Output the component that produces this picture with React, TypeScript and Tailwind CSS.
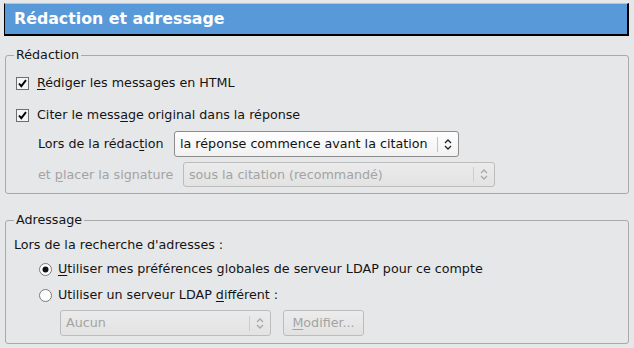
import React from "react"

function CheckBox() {
    return (
        <svg width="13" height="13" viewBox="0 0 13 13" className="shrink-0">
            <rect x="0.5" y="0.5" width="12" height="12" fill="#f4f4f4" stroke="#6e6e6e" />
            <path d="M3 6.5 L5.3 9.2 L10 3.2" fill="none" stroke="#000" strokeWidth="1.9" />
        </svg>
    )
}

function Radio({ checked }: { checked?: boolean }) {
    return (
        <svg width="13" height="13" viewBox="0 0 13 13" className="shrink-0">
            <circle cx="6.5" cy="6.5" r="6" fill="#fdfdfd" stroke="#7a7a7a" />
            {checked && <circle cx="6.5" cy="6.5" r="3" fill="#111" />}
        </svg>
    )
}

function Arrows({ disabled }: { disabled?: boolean }) {
    const c = disabled ? "#a8a8a8" : "#222"
    return (
        <svg width="8" height="11" viewBox="0 0 8 11">
            <path d="M1 4 L4 1 L7 4" fill="none" stroke={c} strokeWidth="1.3" />
            <path d="M1 7 L4 10 L7 7" fill="none" stroke={c} strokeWidth="1.3" />
        </svg>
    )
}

function Select({ text, disabled, className }: { text: string, disabled?: boolean, className: string }) {
    return (
        <div
            className={
                "flex items-stretch rounded-[3px] border " +
                (disabled
                    ? "border-[#bcbcbc] bg-gradient-to-b from-[#ebebeb] to-[#e3e3e3] text-[#a3a3a3] "
                    : "border-[#8c8c8c] bg-gradient-to-b from-white to-[#f1f1f1] text-[#111] ") +
                className
            }
        >
            <div className="flex-1 flex items-center pl-[5px] whitespace-nowrap overflow-hidden">{text}</div>
            <div className="flex items-center">
                <div className={"w-px h-[15px] " + (disabled ? "bg-[#cdcdcd]" : "bg-[#c4c4c4]")} />
                <div className="w-[20px] flex items-center justify-center">
                    <Arrows disabled={disabled} />
                </div>
            </div>
        </div>
    )
}

export default function App() {
    return (
        <div
            className="w-[634px] h-[348px] overflow-hidden bg-[#e6e7e8] pt-[3px] pl-[4px] pr-[5px] text-[12.7px] leading-[16px] text-[#141414]"
            style={{ fontFamily: '"DejaVu Sans", sans-serif' }}
        >
            <div className="h-[33px] bg-[#5899da] border-t border-l border-r-2 border-b-2 border-t-[#c2c2c2] border-l-black border-r-black border-b-black flex items-center pl-[9px]">
                <span className="text-white font-bold text-[15.8px]">Rédaction et adressage</span>
            </div>

            <fieldset className="mt-[11px] ml-px border border-[#a9a9a9] rounded-[3px] pl-[7px] pr-2 pb-[6px]">
                <legend className="ml-px px-[2px] leading-[16px]">Rédaction</legend>
                <div className="mt-[8px] h-[24px] flex items-center pl-[3px] gap-[8px]">
                    <CheckBox />
                    <span><u className="underline-offset-2">R</u>édiger les messages en HTML</span>
                </div>
                <div className="mt-[8px] h-[24px] flex items-center pl-[3px] gap-[8px]">
                    <CheckBox />
                    <span>Citer le mess<u className="underline-offset-2">a</u>ge original dans la réponse</span>
                </div>
                <div className="mt-[4px] flex items-center pl-[25px]">
                    <span className="w-[136px]">Lors de la rédac<u className="underline-offset-2">t</u>ion</span>
                    <Select text="la réponse commence avant la citation" className="w-[285px] h-[26px]" />
                </div>
                <div className="mt-[5px] flex items-center pl-[25px]">
                    <span className="w-[145px] text-[#a3a3a3]">et <u className="underline-offset-2">p</u>lacer la signature</span>
                    <Select disabled text="sous la citation (recommandé)" className="w-[312px] h-[25px]" />
                </div>
            </fieldset>

            <fieldset className="mt-[18px] ml-px border border-[#a9a9a9] rounded-[3px] pl-[7px] pr-2 pb-[7px]">
                <legend className="ml-px px-[2px] leading-[16px]">Adressage</legend>
                <div className="mt-[7px] h-[20px] flex items-center pl-px">Lors de la recherche d'adresses :</div>
                <div className="mt-[4px] h-[20px] flex items-center pl-[26px] gap-[6px]">
                    <Radio checked />
                    <span><u className="underline-offset-2">U</u>tiliser mes préférences globales de serveur LDAP pour ce compte</span>
                </div>
                <div className="mt-[6px] h-[20px] flex items-center pl-[26px] gap-[6px]">
                    <Radio />
                    <span>Utiliser un serveur LDAP <u className="underline-offset-2">d</u>ifférent :</span>
                </div>
                <div className="mt-[5px] flex items-center pl-[47px] gap-[12px]">
                    <Select disabled text="Aucun" className="w-[211px] h-[26px]" />
                    <div className="w-[81px] h-[26px] rounded-[3px] border border-[#bcbcbc] bg-gradient-to-b from-[#ececec] to-[#e2e2e2] text-[#a3a3a3] flex items-center justify-center">
                        <span><u className="underline-offset-2">M</u>odifier...</span>
                    </div>
                </div>
            </fieldset>
        </div>
    )
}
